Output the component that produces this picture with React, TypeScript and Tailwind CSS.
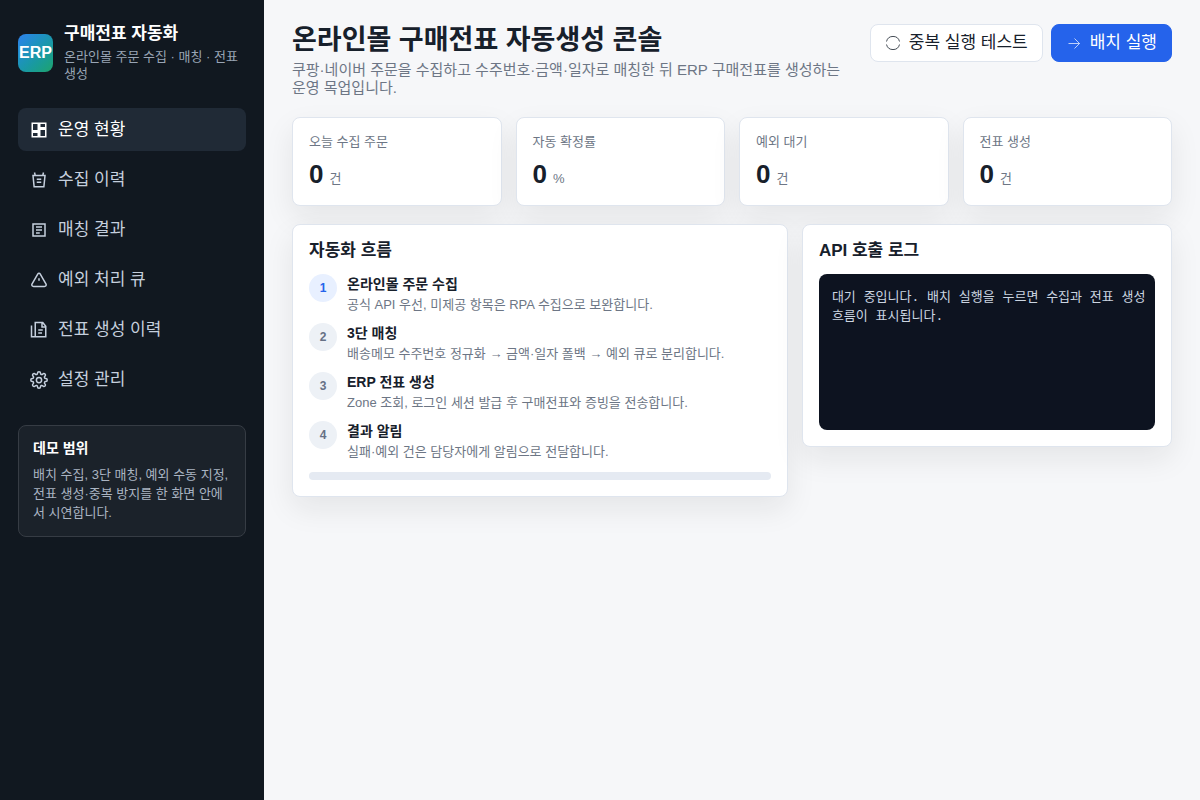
import React, { useState } from "react";
import { clsx } from "clsx";

interface NavItem {
    label: string,
    icon: React.ReactNode,
}

interface Metric {
    label: string,
    value: number,
    unit: string,
}

interface Step {
    title: string,
    text: string,
}

const navItems: NavItem[] = [
    {
        label: "운영 현황",
        icon: <path d="M3 3h8v10H3zM13 3h8v6h-8zM13 11h8v10h-8zM3 15h8v6H3z" />,
    },
    {
        label: "수집 이력",
        icon: <path d="M4 6h16l-1.5 15h-13zM7 6 6 2M17 6l1-4M9 11h6M9 15h6" />,
    },
    {
        label: "매칭 결과",
        icon: <path d="M4 4h16v16H4zM8 8h8M8 12h8M8 16h5" />,
    },
    {
        label: "예외 처리 큐",
        icon: <path d="M12 9.5V13M10.5 3.9 2.6 17.6a2 2 0 0 0 1.7 2.9h15.4a2 2 0 0 0 1.7-2.9L13.5 3.9a1.75 1.75 0 0 0-3 0z" />,
    },
    {
        label: "전표 생성 이력",
        icon: <path d="M7 2h10l4 5v14H7zM16 2v6h5M2 6v15h5M11 12h6M11 16h5" />,
    },
    {
        label: "설정 관리",
        icon: (
            <>
                <circle cx="12" cy="12" r="3.5" />
                <path d="M19.4 15a1.7 1.7 0 0 0 .3 1.9l.1.1a2 2 0 1 1-2.8 2.8l-.1-.1a1.7 1.7 0 0 0-2.9 1.2v.1a2 2 0 1 1-4 0v-.1a1.7 1.7 0 0 0-2.9-1.2l-.1.1a2 2 0 1 1-2.8-2.8l.1-.1A1.7 1.7 0 0 0 3.1 14H3a2 2 0 1 1 0-4h.1a1.7 1.7 0 0 0 1.2-2.9L4.2 7A2 2 0 1 1 7 4.2l.1.1A1.7 1.7 0 0 0 10 3.1V3a2 2 0 1 1 4 0v.1a1.7 1.7 0 0 0 2.9 1.2l.1-.1A2 2 0 1 1 19.8 7l-.1.1a1.7 1.7 0 0 0 1.2 2.9h.1a2 2 0 1 1 0 4h-.1a1.7 1.7 0 0 0-1.5 1z" />
            </>
        ),
    },
];

const metrics: Metric[] = [
    { label: "오늘 수집 주문", value: 0, unit: "건" },
    { label: "자동 확정률", value: 0, unit: "%" },
    { label: "예외 대기", value: 0, unit: "건" },
    { label: "전표 생성", value: 0, unit: "건" },
];

const steps: Step[] = [
    { title: "온라인몰 주문 수집", text: "공식 API 우선, 미제공 항목은 RPA 수집으로 보완합니다." },
    { title: "3단 매칭", text: "배송메모 수주번호 정규화 → 금액·일자 폴백 → 예외 큐로 분리합니다." },
    { title: "ERP 전표 생성", text: "Zone 조회, 로그인 세션 발급 후 구매전표와 증빙을 전송합니다." },
    { title: "결과 알림", text: "실패·예외 건은 담당자에게 알림으로 전달합니다." },
];

const cardClass = "rounded-lg border border-[#dfe5ee] bg-white p-4 shadow-[0_12px_30px_rgba(20,24,31,0.08)]";

export default function App() {

    const [active, setActive] = useState(0);

    return (
        <div className="flex min-h-screen bg-[#f6f7f9] font-['Liberation_Sans','Noto_Sans_CJK_KR',sans-serif] text-[#17202b]">
            <aside className="w-[264px] shrink-0 bg-[#111820] px-[18px] py-6 text-white">
                <div className="mb-[26px] flex items-center gap-[11px]">
                    <div className="flex h-[38px] w-[35px] shrink-0 items-center justify-center rounded-lg bg-linear-135 from-[#2f80ed] to-[#20a36a] font-bold">ERP</div>
                    <div>
                        <strong className="block text-[17px] leading-5">구매전표 자동화</strong>
                        <span className="mt-1 block text-[13px] leading-[17px] text-[#99a5b5]">온라인몰 주문 수집 · 매칭 · 전표 생성</span>
                    </div>
                </div>

                <nav className="flex flex-col gap-[7px]">
                    {navItems.map((item, index) => (
                        <button
                            key={item.label}
                            type="button"
                            onClick={() => setActive(index)}
                            className={clsx(
                                "flex h-[43px] w-full items-center gap-2.5 rounded-lg px-3 text-left text-[17px]",
                                index === active ? "bg-[#202a36] text-white" : "text-[#c5cfdd]"
                            )}
                        >
                            <svg viewBox="0 0 24 24" className="size-[18px] shrink-0 fill-none stroke-current stroke-2" aria-hidden="true">{item.icon}</svg>
                            {item.label}
                        </button>
                    ))}
                </nav>

                <div className="mt-6 rounded-lg border border-[#363c44] bg-[#1b222a] p-3.5">
                    <strong className="block text-sm leading-[17px]">데모 범위</strong>
                    <p className="mt-2 text-[13px] leading-[19px] text-[#aab4c2]">배치 수집, 3단 매칭, 예외 수동 지정, 전표 생성·중복 방지를 한 화면 안에서 시연합니다.</p>
                </div>
            </aside>

            <main className="min-w-0 flex-1 px-7 py-6">
                <header className="mb-5 flex items-start justify-between gap-6">
                    <div>
                        <h1 className="text-[27px] leading-[33px] font-bold">온라인몰 구매전표 자동생성 콘솔</h1>
                        <p className="mt-1 text-[15px] leading-[18px] text-[#6d7685]">쿠팡·네이버 주문을 수집하고 수주번호·금액·일자로 매칭한 뒤 ERP 구매전표를 생성하는 운영 목업입니다.</p>
                    </div>
                    <div className="flex shrink-0 gap-2 text-[17px]">
                        <button type="button" className="flex h-[38px] items-center gap-2 rounded-lg border border-[#dfe5ee] bg-white px-3.5">
                            <svg viewBox="0 0 16 16" className="size-4 fill-none stroke-current" aria-hidden="true">
                                <path d="M1.5 6.5a6.7 6.7 0 0 1 13 0M14.5 9.5a6.7 6.7 0 0 1-13 0" strokeWidth="0.8" />
                            </svg>
                            중복 실행 테스트
                        </button>
                        <button type="button" className="flex h-[38px] items-center gap-2 rounded-lg border border-[#2563eb] bg-[#2563eb] px-3.5 text-white">
                            <svg viewBox="0 0 16 16" className="size-4 fill-none stroke-current" aria-hidden="true">
                                <path d="M2.5 8.5h11M8.5 3.5l5 5-5 5" strokeWidth="0.7" />
                            </svg>
                            배치 실행
                        </button>
                    </div>
                </header>

                <section className="mb-[18px] grid grid-cols-4 gap-3.5">
                    {metrics.map((metric) => (
                        <div key={metric.label} className={cardClass}>
                            <p className="text-[13px] leading-4 text-[#6d7685]">{metric.label}</p>
                            <p className="mt-[9px] flex items-baseline gap-1.5">
                                <strong className="text-[26px] leading-[30px]">{metric.value}</strong>
                                <span className="text-[13px] leading-4 text-[#6d7685]">{metric.unit}</span>
                            </p>
                        </div>
                    ))}
                </section>

                <section className="grid grid-cols-[1.34fr_1fr] items-start gap-3.5">
                    <div className={cardClass}>
                        <h2 className="mb-[13px] text-[17px] leading-5 font-bold">자동화 흐름</h2>
                        <ol className="flex flex-col gap-[7px]">
                            {steps.map((step, index) => (
                                <li key={step.title} className="flex items-start gap-2.5">
                                    <span className={clsx(
                                        "flex size-7 shrink-0 items-center justify-center rounded-full text-xs font-bold",
                                        index === 0 ? "bg-[#e8f0ff] text-[#2563eb]" : "bg-[#edf1f6] text-[#667085]"
                                    )}>
                                        {index + 1}
                                    </span>
                                    <div>
                                        <strong className="block text-sm leading-5">{step.title}</strong>
                                        <p className="text-[13px] leading-[22px] text-[#6d7685]">{step.text}</p>
                                    </div>
                                </li>
                            ))}
                        </ol>
                        <div className="mt-[9px] h-2 rounded-full bg-[#e5eaf2]"></div>
                    </div>

                    <div className={cardClass}>
                        <h2 className="mb-[13px] text-[17px] leading-5 font-bold">API 호출 로그</h2>
                        <div className="min-h-[156px] rounded-lg bg-[#0d1320] py-3.5 pr-2 pl-[13px] font-['Liberation_Mono','Noto_Sans_CJK_KR',monospace] text-[13px] leading-[19px] text-[#cbd5e1]">
                            대기 중입니다. 배치 실행을 누르면 수집과 전표 생성 흐름이 표시됩니다.
                        </div>
                    </div>
                </section>
            </main>
        </div>
    );
}
